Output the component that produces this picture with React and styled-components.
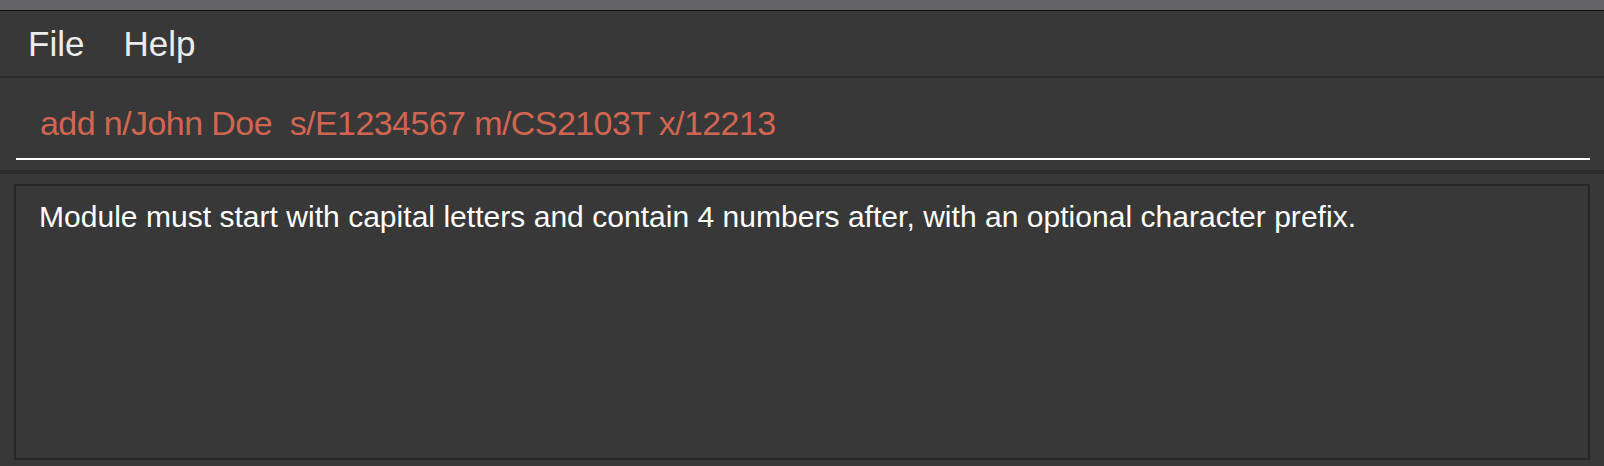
import React from "react";
import styled, { createGlobalStyle } from "styled-components";

const Global = createGlobalStyle`
  html, body { margin: 0; padding: 0; background: #383838; }
  body { font-family: "Liberation Sans", Arial, sans-serif; }
`;

const Window = styled.div`
  width: 1604px;
  height: 466px;
  display: flex;
  flex-direction: column;
  background: #383838;
  overflow: hidden;
`;

const TitleStrip = styled.div`
  height: 10px;
  background: #646466;
  border-bottom: 1px solid #111111;
  flex: none;
`;

const MenuBar = styled.div`
  height: 65px;
  flex: none;
  display: flex;
  align-items: flex-start;
  padding: 0 0 0 28px;
  border-bottom: 2px solid #2b2b2b;
`;

const MenuItem = styled.div`
  font-size: 35px;
  line-height: 35px;
  color: #ececec;
  padding-top: 15px;
  margin-right: ${(p) => p.$gap || 0}px;
`;

const CommandArea = styled.div`
  height: 92px;
  flex: none;
  padding: 0 14px 0 16px;
  box-sizing: border-box;
`;

const CommandField = styled.div`
  height: 82px;
  box-sizing: border-box;
  border-bottom: 2px solid #ffffff;
  padding: 28px 0 0 24px;
  font-size: 34px;
  line-height: 34px;
  letter-spacing: -0.58px;
  color: #d06651;
  white-space: pre;
`;

const Divider = styled.div`
  height: 4px;
  flex: none;
  background: #2b2b2b;
`;

const ResultPane = styled.div`
  flex: 1;
  padding: 10px 14px 6px 14px;
  display: flex;
`;

const ResultBox = styled.div`
  flex: 1;
  border: 2px solid #262626;
  padding: 16px 0 0 23px;
  font-size: 30px;
  line-height: 30px;
  letter-spacing: 0.03px;
  color: #ffffff;
`;

export default function App() {
  return (
    <>
      <Global />
      <Window>
        <TitleStrip />
        <MenuBar>
          <MenuItem $gap={39}>File</MenuItem>
          <MenuItem>Help</MenuItem>
        </MenuBar>
        <CommandArea>
          <CommandField>{"add n/John Doe  s/E1234567 m/CS2103T x/12213"}</CommandField>
        </CommandArea>
        <Divider />
        <ResultPane>
          <ResultBox>
            Module must start with capital letters and contain 4 numbers after, with an optional character prefix.
          </ResultBox>
        </ResultPane>
      </Window>
    </>
  );
}
